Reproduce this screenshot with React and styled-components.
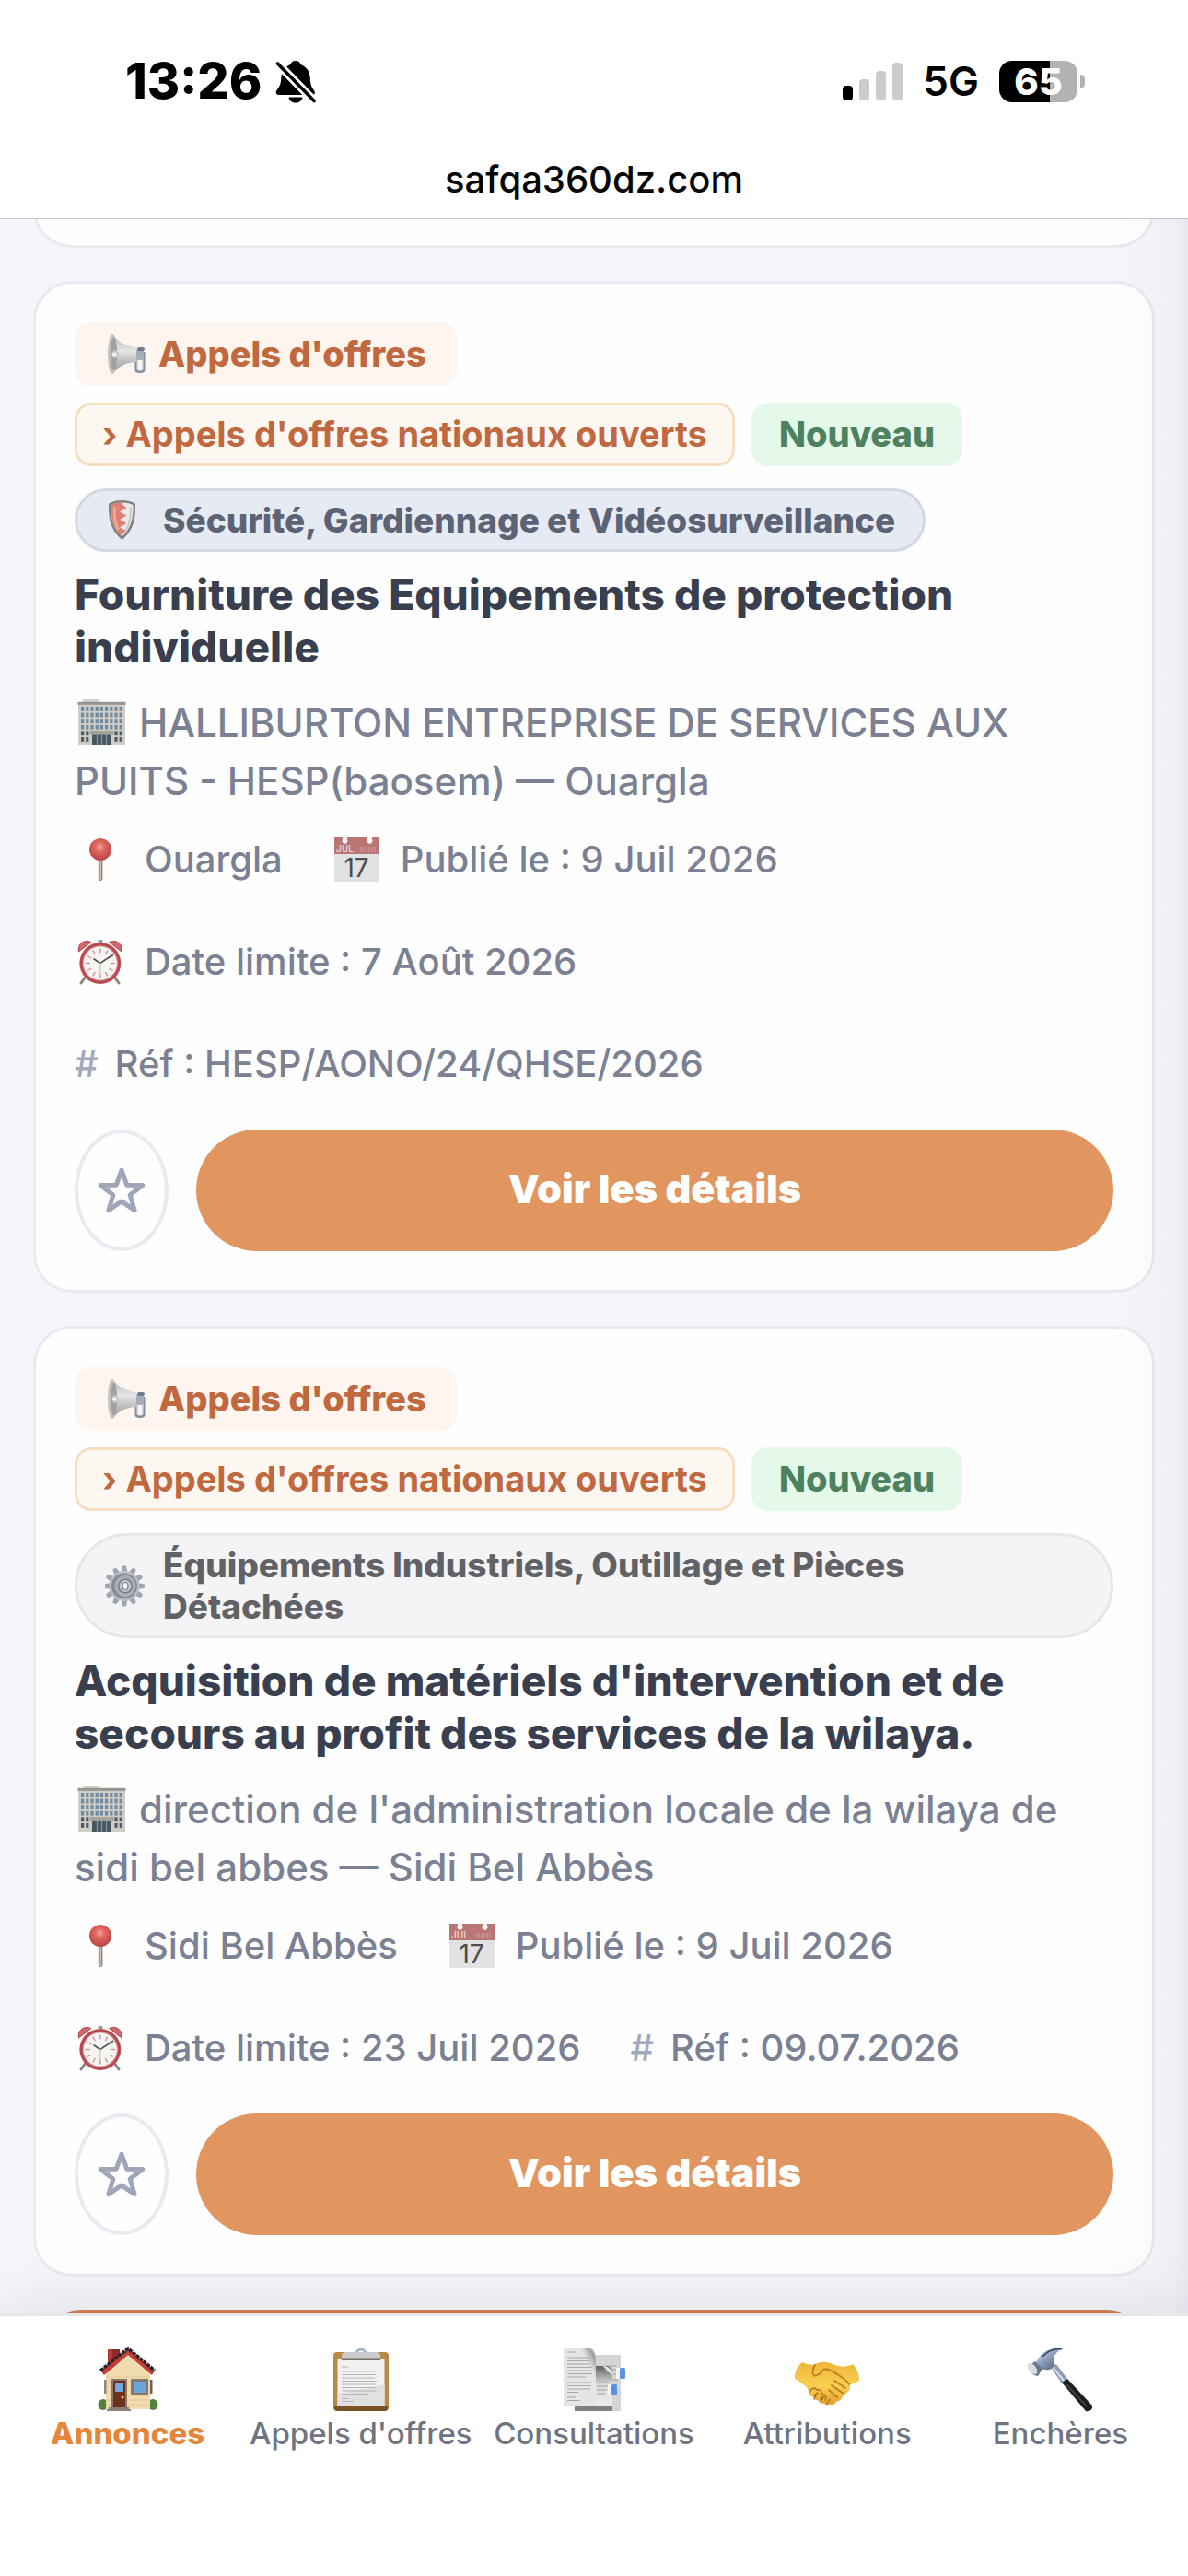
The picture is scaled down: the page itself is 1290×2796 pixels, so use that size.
import React from "react";
import styled, { createGlobalStyle } from "styled-components";

const GlobalStyle = createGlobalStyle`
  *, *::before, *::after { box-sizing: border-box; }
  body {
    margin: 0;
    background: #ffffff;
    font-family: Inter, "Liberation Sans", sans-serif;
    -webkit-font-smoothing: antialiased;
  }
`;

const Shell = styled.div`
  display: flex;
  flex-direction: column;
  height: 100vh;
  overflow: hidden;
`;

/* ---------- status bar ---------- */

const Header = styled.header`
  position: relative;
  z-index: 2;
  flex: none;
  background: #ffffff;
  border-bottom: 1px solid #c4c4c4;
`;

const StatusBar = styled.div`
  display: flex;
  justify-content: space-between;
  align-items: center;
  padding: 56px 112px 0 136px;
  height: 120px;
`;

const StatusGroup = styled.div`
  display: flex;
  align-items: center;
  gap: ${(p) => p.$gap}px;
`;

const Clock = styled.time`
  font-size: 54px;
  line-height: 64px;
  font-weight: 800;
  color: #000;
`;

const Network = styled.span`
  font-size: 44px;
  line-height: 64px;
  font-weight: 600;
  color: #000;
`;

const SignalBars = styled.span`
  display: flex;
  align-items: flex-end;
  gap: 7px;
  height: 41px;
`;

const SignalBar = styled.i`
  width: 11px;
  height: ${(p) => p.$h}px;
  border-radius: 4px;
  background: ${(p) => (p.$on ? "#000" : "#cbcbcb")};
`;

const BatteryWrap = styled.span`
  display: flex;
  align-items: center;
  gap: 3px;
`;

const BatteryBody = styled.span`
  display: flex;
  align-items: center;
  justify-content: center;
  width: 85px;
  height: 45px;
  border-radius: 14px;
  background: linear-gradient(90deg, #000 65%, #b2b2b2 65%);
  color: #fff;
  font-size: 40px;
  line-height: 45px;
  font-weight: 800;
`;

const BatteryCap = styled.i`
  width: 5px;
  height: 15px;
  border-radius: 0 8px 8px 0;
  background: #b2b2b2;
`;

const Address = styled.div`
  height: 117px;
  padding-top: 51px;
  text-align: center;
  font-size: 40px;
  line-height: 48px;
  font-weight: 500;
  color: #060606;
`;

/* ---------- feed ---------- */

const Feed = styled.main`
  position: relative;
  flex: 1 1 0;
  min-height: 0;
  overflow: hidden;
  background: #f5f6fb;

  &::after {
    content: "";
    position: absolute;
    top: 0;
    right: 0;
    bottom: 0;
    width: 90px;
    pointer-events: none;
    background: linear-gradient(
      90deg,
      rgba(20, 20, 60, 0) 0%,
      rgba(20, 20, 60, 0.01) 50%,
      rgba(20, 20, 60, 0.025) 80%,
      rgba(20, 20, 40, 0.06) 100%
    );
  }
`;

const FeedList = styled.div`
  display: flex;
  flex-direction: column;
  gap: 36px;
  padding: 0 36px;
  margin-top: -90px;
`;

const Card = styled.article`
  flex: none;
  min-height: 121px;
  padding: 42px;
  border: 3px solid ${(p) => (p.$accent ? "#d2824f" : "#e9eaf1")};
  border-radius: ${(p) => (p.$accent ? 54 : 42)}px;
  background: #fefefe;
`;

const Chips = styled.div`
  display: flex;
  flex-wrap: wrap;
  gap: 18px;
`;

const chipTones = {
  type: { fg: "#c0683f", bg: "#fdf5ee", line: "transparent", pad: 30 },
  kind: { fg: "#c0683f", bg: "#fdf7f2", line: "#f5dfc0", pad: 27 },
  fresh: { fg: "#4e825e", bg: "#e4f9ea", line: "transparent", pad: 27 },
};

const Chip = styled.span`
  display: inline-flex;
  align-items: center;
  gap: 12px;
  padding: 9px ${(p) => chipTones[p.$tone].pad}px;
  border: 3px solid ${(p) => chipTones[p.$tone].line};
  border-radius: 18px;
  background: ${(p) => chipTones[p.$tone].bg};
  background-clip: ${(p) => (p.$tone === "kind" ? "padding-box" : "border-box")};
  color: ${(p) => chipTones[p.$tone].fg};
  font-size: 38px;
  line-height: 45px;
  font-weight: ${(p) => (p.$tone === "kind" ? 700 : 800)};
  white-space: nowrap;
`;

const Sector = styled.div`
  display: flex;
  align-items: center;
  gap: 18px;
  width: fit-content;
  max-width: 100%;
  margin-top: 24px;
  padding: 9px 30px;
  border: 3px solid ${(p) => (p.$cool ? "#d3d9e4" : "#e7e7ea")};
  border-radius: 60px;
  background: ${(p) => (p.$cool ? "#e6eaf3" : "#f4f4f7")};
  color: ${(p) => (p.$cool ? "#5b6374" : "#616166")};
  font-size: 37px;
  line-height: 45px;
  font-weight: 800;

  svg {
    flex: none;
  }
`;

const Title = styled.h2`
  margin: 18px 0 0;
  font-size: 46px;
  line-height: 57px;
  font-weight: 800;
  color: #3a3f4f;
`;

const Org = styled.p`
  margin: 22px 0 0;
  font-size: 42px;
  line-height: 63px;
  font-weight: 500;
  color: #7b8193;

  svg {
    vertical-align: -10px;
    margin-right: 14px;
  }
`;

const Meta = styled.ul`
  display: flex;
  flex-wrap: wrap;
  gap: 54px;
  margin: 25px 0 0;
  padding: 0;
  list-style: none;
  font-size: 40px;
  line-height: 57px;
  font-weight: 500;
  color: #7b8193;
`;

const MetaItem = styled.li`
  display: flex;
  align-items: center;
  gap: ${(p) => (p.$tight ? 18 : 20)}px;
`;

const Hash = styled.span`
  color: #a3a9bd;
`;

const Actions = styled.div`
  display: flex;
  gap: 30px;
  margin-top: 43px;
`;

const Favourite = styled.button`
  display: flex;
  flex: none;
  align-items: center;
  justify-content: center;
  width: 102px;
  height: 132px;
  padding: 0;
  border: 4px solid #e9ebf2;
  border-radius: 50%;
  background: transparent;
  color: #a0a6ba;
`;

const Details = styled.a`
  display: flex;
  flex: 1;
  align-items: center;
  justify-content: center;
  padding-bottom: 4px;
  border-radius: 66px;
  background: #e2965f;
  color: #fff;
  font-size: 43px;
  line-height: 50px;
  font-weight: 900;
  text-decoration: none;
`;

/* ---------- tab bar ---------- */

const TabBar = styled.nav`
  position: relative;
  z-index: 1;
  display: grid;
  grid-template-columns: repeat(5, minmax(0, 1fr));
  flex: none;
  height: 285px;
  padding: 32px 12px 0;
  border-top: 3px solid #e7e7e9;
  background: #ffffff;
  box-shadow: 0 -10px 60px rgba(20, 20, 50, 0.09);
`;

const Tab = styled.a`
  display: flex;
  flex-direction: column;
  align-items: center;
  gap: 3px;
  color: ${(p) => (p.$active ? "#e5863c" : "#6e7481")};
  font-size: 33px;
  line-height: 40px;
  font-weight: ${(p) => (p.$active ? 800 : 500)};
  text-decoration: none;
  white-space: nowrap;
`;

/* ---------- drawings ---------- */

const BellOff = () => (
  <svg width="44" height="47" viewBox="0 0 44 47" aria-hidden="true">
    <path d="M22 1c3.400 0 5 2 5.500 4C34 7.500 37.500 13 37.800 20c.2 6 1.200 9.500 4.400 13.500 1.600 2.300.4 4.500-2.200 4.500H4C.9 38-.2 35.400 1.500 33 5 28.500 6.100 25 6.300 20c.3-7 3.700-12.500 10.200-15C17 3 18.600 1 22 1z" />
    <path d="M14.500 40.500h15c-.6 4-3.800 6-7.500 6s-6.900-2-7.500-6z" />
    <path d="M2.500 4 42 44.500" stroke="#fff" strokeWidth="9" />
    <path d="M2.500 4 42 44.500" stroke="#000" strokeWidth="3.600" strokeLinecap="round" />
  </svg>
);

const Megaphone = () => (
  <svg width="46" height="45" viewBox="0 0 46 45" aria-hidden="true">
    <defs>
      <linearGradient id="mgHorn" x1="0" y1="0" x2="0" y2="1">
        <stop offset="0" stopColor="#b4b4b5" />
        <stop offset=".42" stopColor="#e6e6e6" />
        <stop offset="1" stopColor="#8f8f92" />
      </linearGradient>
    </defs>
    <path d="M34 26v14c0 2 7 2 8 0V20" fill="none" stroke="#8590a0" strokeWidth="3" />
    <path d="M35 27v12c1 1.500 5 1.500 6 0V22" fill="none" stroke="#dfe5ee" strokeWidth="1" />
    <path d="M8 1c6 8 14 12 27 15v15C23 31 14 36 8 44z" fill="url(#mgHorn)" />
    <rect x="34" y="17" width="8" height="12" rx="2.500" fill="#a4acb8" />
    <rect x="35" y="15" width="8" height="4" rx="2" fill="#6f7c8f" />
    <ellipse cx="8" cy="22.500" rx="5" ry="21.500" fill="#c3c3c4" />
    <ellipse cx="9.500" cy="22.500" rx="3.600" ry="18" fill="#a0a0a2" />
    <path d="M9 18c4 0 6 1.500 6 4.500s-2 4.500-6 4.500z" fill="#c8c8c9" />
    <ellipse cx="10" cy="22.500" rx="2.600" ry="2.200" fill="#f0f0f0" />
  </svg>
);

const Shield = () => (
  <svg width="45" height="45" viewBox="0 0 45 45" aria-hidden="true">
    <path d="M18.500 1c5 0 10 1 14.500 3.500.5 17-2 29-14.500 39.500C6 33.500 3.500 21.500 4 4.500 8.500 2 13.500 1 18.500 1z" fill="#86807f" />
    <path d="M18.500 3.500c4.500 0 8.500.8 12 2.600.3 14.500-2 25-12 34.400C8.500 31 6.200 20.600 6.500 6.100c3.500-1.800 7.500-2.600 12-2.600z" fill="#e9e9eb" />
    <path d="M17 3.600c-4 0-7.300.9-10.400 2.500C6.400 20.500 9 30.500 17 39l6-5-7-3.500 7.500-4.500-7.500-4 7.500-4.500-7.500-4 7.500-4z" fill="#de7f70" />
    <path d="M10.500 8c-1 10 .5 18 4 25" stroke="#eda79b" strokeWidth="3" fill="none" />
    <path d="M28 8c.5 11-1 19-6 26" stroke="#c8c9cc" strokeWidth="2" fill="none" />
  </svg>
);

const Gear = () => (
  <svg width="45" height="45" viewBox="0 0 45 45" aria-hidden="true">
    <g fill="#9ea5b0">
      {[0, 30, 60, 90, 120, 150, 180, 210, 240, 270, 300, 330].map((a) => (
        <path key={a} d="M17.500 8l1.500-7.500h4L24.500 8z" transform={`rotate(${a} 21 22.500)`} />
      ))}
    </g>
    <circle cx="21" cy="22.500" r="16.500" fill="#bac0c9" />
    <circle cx="21" cy="22.500" r="14" fill="#858b95" />
    <circle cx="22" cy="22.500" r="11.500" fill="#a9aeb7" />
    <circle cx="22" cy="22.500" r="8" fill="#777c86" />
    <circle cx="22" cy="22.500" r="6.500" fill="#c6cad1" />
    <ellipse cx="22" cy="22.500" rx="3" ry="4" fill="#f7f7f8" stroke="#787d86" strokeWidth="1.200" />
  </svg>
);

const Building = () => (
  <svg width="56" height="52" viewBox="0 0 56 52" aria-hidden="true">
    <rect x="9" y="1" width="17" height="5" fill="#d2d0cc" />
    <rect x="4" y="5" width="51" height="46" fill="#d0cdc7" />
    <rect x="3.500" y="3.800" width="52" height="3" fill="#96938f" />
    {[9, 15.600, 22.200, 28.800, 35.400, 42].map((y, r) => (
      <g key={y}>
        {[7, 12.200, 17.400, 22.600, 27.800, 33, 38.200, 43.400, 48.600].map((x, c) =>
          r > 3 && c > 1 && c < 7 ? null : (
            <rect key={x} x={x} y={y} width="3.200" height="4.800" fill={r > 3 ? "#4b5c68" : "#6f8ba0"} />
          )
        )}
      </g>
    ))}
    <rect x="16.500" y="35" width="26" height="4.500" fill="#a5a19b" />
    <rect x="19" y="39.500" width="21" height="11.500" fill="#465764" />
    <path d="M24.500 39.500V51M29.500 39.500V51M34.500 39.500V51" stroke="#8796a1" strokeWidth="1.200" />
  </svg>
);

const Pin = () => (
  <svg width="56" height="50" viewBox="0 0 56 50" aria-hidden="true">
    <defs>
      <radialGradient id="pinHead" cx=".48" cy=".38" r=".62">
        <stop offset="0" stopColor="#f5a49c" />
        <stop offset=".35" stopColor="#e2685f" />
        <stop offset="1" stopColor="#b8444a" />
      </radialGradient>
    </defs>
    <rect x="25.800" y="22" width="4.600" height="26" rx="2" fill="#96857c" />
    <rect x="27.600" y="24" width="1.300" height="23" fill="#d4c6bd" />
    <circle cx="28" cy="14" r="12" fill="url(#pinHead)" />
  </svg>
);

const CalendarText = styled.text`
  font-family: Inter, "Liberation Sans", sans-serif;
  font-size: ${(p) => p.$size}px;
  font-weight: ${(p) => p.$weight};
`;

const Calendar = () => (
  <svg width="54" height="50" viewBox="0 0 54 50" aria-hidden="true">
    <rect x="2" y="1" width="49" height="48" fill="#e2e2e3" />
    <path d="M2 1h49v18H2z" fill="#b97675" />
    <path d="M11 0h5v3a3 3 0 1 1-5 0zM38 0h5v3a3 3 0 1 1-5 0z" fill="#fbf6f6" />
    <path d="M31 11v6M34 11v6M37 11v6M40 11v6M43 11v6M46 11v6" stroke="#d09b9a" strokeWidth="1.200" />
    <CalendarText x="4" y="17" $size={10} $weight={400} fill="#f6e7e6">JUL</CalendarText>
    <CalendarText x="26" y="44" textAnchor="middle" $size={28} $weight={400} fill="#4d4d4f">17</CalendarText>
  </svg>
);

const Alarm = () => (
  <svg width="56" height="50" viewBox="0 0 56 50" aria-hidden="true">
    <path d="M12 41l-5 7M43 41l5 7" stroke="#8d8482" strokeWidth="3" strokeLinecap="round" />
    <path d="M4.500 14C2.500 5 11 0 18 3.500zM51 14c2-9-6.500-14-13.500-10.500z" fill="#d0676a" stroke="#b4494f" />
    <rect x="25.500" y="1" width="5" height="4" rx="1" fill="#9a9a9c" />
    <circle cx="27.800" cy="26.500" r="22.500" fill="#c6535a" />
    <circle cx="27.800" cy="26.500" r="20.800" fill="none" stroke="#a13f48" strokeWidth="1" />
    <circle cx="27.800" cy="26.500" r="18.500" fill="#f5f5f4" stroke="#d2a5a5" strokeWidth="1" />
    {[0, 30, 60, 90, 120, 150, 180, 210, 240, 270, 300, 330].map((a) => (
      <path key={a} d="M27.800 10.500v5" stroke="#d9858a" strokeWidth="1.300" transform={`rotate(${a} 27.800 26.500)`} />
    ))}
    <path d="M20.500 21.500l7.300 5L42 17" fill="none" stroke="#595556" strokeWidth="1.600" />
    <path d="M27.800 26v13" stroke="#d8c491" strokeWidth="1.200" />
  </svg>
);

const Star = () => (
  <svg width="52" height="52" viewBox="0 0 52 52" aria-hidden="true">
    <path
      d="M26 4l5.700 16.200 17.100.4-13.600 10.500 4.900 16.500L26 37.900 11.900 47.600l4.900-16.500L3.200 20.600l17.100-.4z"
      fill="none"
      stroke="currentColor"
      strokeWidth="5"
      strokeLinejoin="round"
    />
  </svg>
);

const House = () => (
  <svg width="70" height="72" viewBox="0 0 70 72" aria-hidden="true">
    <path d="M13 4h13v21H13z" fill="#8e2a27" />
    <path d="M13 4h5v20h-5z" fill="#b53a32" />
    <ellipse cx="8" cy="64" rx="5.500" ry="6" fill="#55803a" />
    <ellipse cx="62" cy="64" rx="5.500" ry="6" fill="#55803a" />
    <path d="M11 30 35 10l24 20v39H11z" fill="#f0dcb0" />
    <path d="M11 34h48M11 39h48M11 44h48M11 49h48M11 54h48M11 59h48M11 64h48" stroke="#dfc794" strokeWidth=".8" />
    <path d="M35 3 64 27l-3 5-26-22L9 32l-4-5z" fill="#c23d34" />
    <path d="M5 27 35 3l29 24" fill="none" stroke="#282326" strokeWidth="3.500" strokeDasharray="4 1" />
    <rect x="9" y="37" width="2.500" height="15" fill="#8b877e" />
    <rect x="59" y="37" width="2.500" height="15" fill="#6c6259" />
    <rect x="17" y="36" width="17" height="31" fill="#8a7768" />
    <rect x="19" y="38" width="13" height="29" fill="#70301f" />
    <rect x="21" y="40" width="9" height="10" fill="#70a9dc" />
    <circle cx="29" cy="56" r="1.600" fill="#e5b54a" />
    <rect x="38" y="36" width="19" height="18" fill="#86796a" />
    <rect x="41" y="39" width="13" height="12" fill="#6aa6dd" />
    <path d="M14 67h22v2h2v2H12v-2h2z" fill="#8a8078" />
  </svg>
);

const Clipboard = () => (
  <svg width="62" height="72" viewBox="0 0 62 72" aria-hidden="true">
    <rect x="1" y="7" width="60" height="64" rx="4" fill="#b88a45" />
    <path d="M2 65h58v2a4 4 0 0 1-4 4H6a4 4 0 0 1-4-4z" fill="#7b5226" />
    <rect x="5.500" y="14" width="51" height="51" fill="#f1f1f2" />
    <path d="M5.500 52 56.500 42v23h-51z" fill="#e1e1e4" />
    <path d="M10 23h7M10 28h36M10 31.500h37M10 35h36M10 38.500h38M10 42h37M10 45.500h36M10 49h38M10 52.500h29M10 57.500h7M10 60.500h13" stroke="#b4b4b8" strokeWidth="1.100" />
    <path d="M26 9a5 5 0 0 1 10 0" fill="none" stroke="#a3b6c6" strokeWidth="3" />
    <path d="M10 15v-4c0-2.500 2-4 5-4h32c3 0 5 1.500 5 4v4z" fill="#c9cacc" />
    <path d="M10 13.500h42v2.500H10z" fill="#776c62" />
  </svg>
);

const BookmarkTabs = () => (
  <svg width="70" height="72" viewBox="0 0 70 72" aria-hidden="true">
    <defs>
      <linearGradient id="curl" x1="0" y1="0" x2="1" y2="1">
        <stop offset=".35" stopColor="#e4e4e4" />
        <stop offset=".6" stopColor="#cfcfcf" />
        <stop offset="1" stopColor="#fafafa" />
      </linearGradient>
      <linearGradient id="sheet" x1="0" y1="1" x2="1" y2="0">
        <stop offset=".75" stopColor="#e5e5e6" />
        <stop offset="1" stopColor="#6e6e6f" />
      </linearGradient>
      <linearGradient id="under" x1="0" y1="0" x2="0" y2="1">
        <stop offset="0" stopColor="#5f5f60" />
        <stop offset=".45" stopColor="#dcdcdd" />
        <stop offset="1" stopColor="#ececed" />
      </linearGradient>
    </defs>
    <rect x="14" y="10" width="50" height="61" fill="#d5d5d6" />
    <path d="M14 66h41v5H14z" fill="#808081" />
    <path d="M46 22h13M48 26h12M56 31h5M56 37h5" stroke="#9f9fa1" strokeWidth="1.200" />
    <rect x="59" y="24" width="5" height="12" fill="#f4f5f7" />
    <rect x="63" y="24" width="6" height="12" rx="1.500" fill="#5793e0" />
    <path d="M30 22h18c5 0 7 4 7 10v34H30z" fill="url(#under)" />
    <path d="M38 40h12M38 44h12M38 48h11M38 52h10" stroke="#9d9d9f" strokeWidth="1.100" />
    <rect x="50" y="42" width="5" height="12" fill="#f4f5f7" />
    <rect x="54" y="42" width="6" height="12" rx="1.500" fill="#5793e0" />
    <path d="M2 2h25c7 0 10 5 10 16v48H2z" fill="url(#sheet)" />
    <path d="M28 2c9 2 8 15 27 30-1-6-4-9.500-9-10C38 18 36 5 28 2z" fill="url(#curl)" />
    <path d="M6 7h9M6 13h24M6 16.500h25M6 20h25M6 23.500h27M6 27h26M6 30.500h27M6 34h20M6 40h26M6 43.500h26M6 47h25M6 50.500h12M6 56h9M6 59.500h14" stroke="#a8a8aa" strokeWidth="1.100" />
  </svg>
);

const Handshake = () => (
  <svg width="72" height="72" viewBox="0 0 72 72" aria-hidden="true">
    <defs>
      <linearGradient id="skin" x1="0" y1="0" x2="0" y2="1">
        <stop offset="0" stopColor="#efb637" />
        <stop offset=".55" stopColor="#f8cf52" />
        <stop offset="1" stopColor="#e2a22e" />
      </linearGradient>
    </defs>
    <path
      d="M9 18c4 2 9 3.500 14 2.500 4-3 10-3.500 15-2 6 2.500 12 5 18 4 4-.5 6-2 8-2 4 3 7 10 7 17-3 3-7 4-10 5 1 6-4 9-8 12-1 4-4 6-7 6-1 3-4 4.500-7 3-2 1.500-5 1-6-1-3 1-5.500-.5-6-3-3 0-5-1-5.500-4-4 0-6-3-5.500-7C14 44 9 41 1 36c-.5-7 3-14 8-18z"
      fill="url(#skin)"
    />
    <path
      d="M23 20.500c-2 4-4 10-1 12 5 1 8-5 11-7 4-1 7 1 10 3 6 4 14 8 17 13.500M41 43l13 9M38 48l9 8M44 38l12 8M17 50c2-4 6-5 8-2 4-1 6 2 5 5 4-1 6 2 4 6"
      fill="none"
      stroke="#bd7c22"
      strokeWidth="1.800"
      strokeLinecap="round"
    />
    <path d="M22 58c0-3 2-6 4-7M29 61c0-3 2-6 4-6M36 63l3-5" stroke="#bd7c22" strokeWidth="1.600" strokeLinecap="round" />
  </svg>
);

const Hammer = () => (
  <svg width="72" height="72" viewBox="0 0 72 72" aria-hidden="true">
    <defs>
      <linearGradient id="steel" x1="0" y1="0" x2="1" y2="1">
        <stop offset="0" stopColor="#d9e4f5" />
        <stop offset=".5" stopColor="#8296b5" />
        <stop offset="1" stopColor="#4c4a51" />
      </linearGradient>
    </defs>
    <path d="M25 22 32 20 44 36 38 41z" fill="#8f9fb5" />
    <path d="M28 23 40 38" stroke="#dfe8f3" strokeWidth="2" />
    <path d="M38 40 44 36 71 65c1 4-3 7-7 6z" fill="#1d1e20" />
    <path d="M43 42 65 66" stroke="#47494c" strokeWidth="1.600" />
    <path d="M10 18C14 8 24 1 40 3c-8 3-11 8-11 12 2 4 0 10-5 11-6 1-11-2-14-8z" fill="url(#steel)" />
    <path d="M17 12c5-6 12-9 21-8.500" stroke="#39496b" strokeWidth="1.800" fill="none" />
    <path d="M2 22 9 17l8 8-5 8C6 32 2 28 2 22z" fill="#6d7687" />
    <ellipse cx="6" cy="25" rx="4" ry="7" transform="rotate(-38 6 25)" fill="#d6dce6" />
  </svg>
);

/* ---------- content ---------- */

const notices = [
  {
    sector: "Sécurité, Gardiennage et Vidéosurveillance",
    SectorIcon: Shield,
    cool: true,
    title: "Fourniture des Equipements de protection individuelle",
    org: "HALLIBURTON ENTREPRISE DE SERVICES AUX PUITS - HESP(baosem) — Ouargla",
    place: "Ouargla",
    published: "9 Juil 2026",
    deadline: "7 Août 2026",
    reference: "HESP/AONO/24/QHSE/2026",
  },
  {
    sector: "Équipements Industriels, Outillage et Pièces Détachées",
    SectorIcon: Gear,
    cool: false,
    title: "Acquisition de matériels d'intervention et de secours au profit des services de la wilaya.",
    org: "direction de l'administration locale de la wilaya de sidi bel abbes — Sidi Bel Abbès",
    place: "Sidi Bel Abbès",
    published: "9 Juil 2026",
    deadline: "23 Juil 2026",
    reference: "09.07.2026",
  },
];

const tabs = [
  { label: "Annonces", Icon: House, active: true },
  { label: "Appels d'offres", Icon: Clipboard },
  { label: "Consultations", Icon: BookmarkTabs },
  { label: "Attributions", Icon: Handshake },
  { label: "Enchères", Icon: Hammer },
];

function Notice({ notice }) {
  const { SectorIcon } = notice;
  return (
    <Card>
      <Chips>
        <Chip $tone="type">
          <Megaphone />
          Appels d'offres
        </Chip>
        <Chip $tone="kind">› Appels d'offres nationaux ouverts</Chip>
        <Chip $tone="fresh">Nouveau</Chip>
      </Chips>
      <Sector $cool={notice.cool}>
        <SectorIcon />
        <span>{notice.sector}</span>
      </Sector>
      <Title>{notice.title}</Title>
      <Org>
        <Building />
        {notice.org}
      </Org>
      <Meta>
        <MetaItem>
          <Pin />
          {notice.place}
        </MetaItem>
        <MetaItem>
          <Calendar />
          Publié le : {notice.published}
        </MetaItem>
        <MetaItem>
          <Alarm />
          Date limite : {notice.deadline}
        </MetaItem>
        <MetaItem $tight>
          <Hash>#</Hash>
          Réf : {notice.reference}
        </MetaItem>
      </Meta>
      <Actions>
        <Favourite type="button" aria-label="Ajouter aux favoris">
          <Star />
        </Favourite>
        <Details href="#details">Voir les détails</Details>
      </Actions>
    </Card>
  );
}

export default function App() {
  return (
    <Shell>
      <GlobalStyle />
      <Header>
        <StatusBar>
          <StatusGroup $gap={14}>
            <Clock>13:26</Clock>
            <BellOff />
          </StatusGroup>
          <StatusGroup $gap={22}>
            <SignalBars>
              <SignalBar $h={16} $on />
              <SignalBar $h={23} />
              <SignalBar $h={32} />
              <SignalBar $h={41} />
            </SignalBars>
            <Network>5G</Network>
            <BatteryWrap>
              <BatteryBody>65</BatteryBody>
              <BatteryCap />
            </BatteryWrap>
          </StatusGroup>
        </StatusBar>
        <Address>safqa360dz.com</Address>
      </Header>
      <Feed>
        <FeedList>
          <Card />
          {notices.map((n) => (
            <Notice key={n.title} notice={n} />
          ))}
          <Card $accent />
        </FeedList>
      </Feed>
      <TabBar aria-label="Navigation">
        {tabs.map(({ label, Icon, active }) => (
          <Tab key={label} href="#tab" $active={active}>
            <Icon />
            {label}
          </Tab>
        ))}
      </TabBar>
    </Shell>
  );
}
